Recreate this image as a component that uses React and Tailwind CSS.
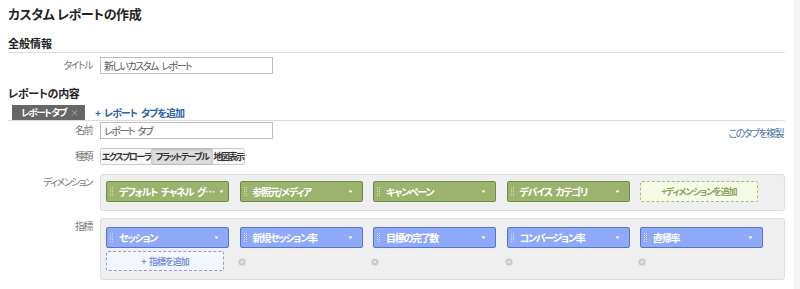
import React from "react";

const dimensions = ["デフォルト\u2002チャネル\u2002グ…", "参照元/メディア", "キャンペーン", "デバイス\u2002カテゴリ"];
const metrics = ["セッション", "新規セッション率", "目標の完了数", "コンバージョン率", "直帰率"];

function Grip({ color }) {
  return (
    <div className="grid grid-cols-2 gap-[1px] mr-[6px] shrink-0">
      {Array.from({ length: 10 }).map((_, i) => (
        <span key={i} className={`block w-[1px] h-[1px] ${color}`} />
      ))}
    </div>
  );
}

function Caret() {
  return (
    <svg width="7" height="4" viewBox="0 0 7 4" className="ml-auto shrink-0">
      <path d="M1.5 0.5h4L3.5 3z" fill="#fff" />
    </svg>
  );
}

function Chip({ label, kind }) {
  const green = kind === "dim";
  return (
    <div
      className={`flex items-center w-[123px] h-[21px] rounded-[2px] border pl-[3px] pr-[8px] shrink-0 ${
        green ? "bg-[#9bb36d] border-[#6f8a47]" : "bg-[#8ea9f7] border-[#5b72cc]"
      }`}
    >
      <Grip color={green ? "bg-[#d4e0bc]" : "bg-[#d6e0ff]"} />
      <span className="text-[10px] font-bold text-white leading-none whitespace-nowrap tracking-[-1.3px] pr-[4px]">
        {label}
      </span>
      <Caret />
    </div>
  );
}

function Row({ label, children, className = "" }) {
  return (
    <div className={`flex ${className}`}>
      <div className="w-[84px] shrink-0 text-right text-[10px] text-[#777] leading-none pt-[3px] whitespace-nowrap tracking-[-1.5px]">
        {label}
      </div>
      <div className="ml-[8px] flex-1">{children}</div>
    </div>
  );
}

function RemoveDot() {
  return (
    <svg width="8" height="8" viewBox="0 0 8 8">
      <circle cx="4" cy="4" r="3.6" fill="#c9c9c9" />
      <path d="M2.6 2.6l2.8 2.8M5.4 2.6l-2.8 2.8" stroke="#efefef" strokeWidth="1" />
    </svg>
  );
}

function Field({ value }) {
  return (
    <div className="w-[173px] h-[17px] border border-[#bbb] px-[3px] text-[10px] text-[#555] leading-[15px] whitespace-nowrap tracking-[-1.5px]">
      {value}
    </div>
  );
}

export default function App() {
  return (
    <div className="flex w-[800px] h-[289px] bg-white overflow-hidden font-['Noto_Sans_CJK_JP','Noto_Sans',sans-serif] [font-feature-settings:'palt']">
      <div className="w-[794px] shrink-0 pl-[8px] pr-[9px]">
        <h1 className="text-[13px] font-bold text-[#222] leading-none pt-[7px] tracking-[-0.4px]">カスタム レポートの作成</h1>

        <h2 className="text-[11px] font-bold text-[#222] leading-none mt-[18px] h-[15px] border-b border-[#ddd]">全般情報</h2>
        <Row label="タイトル" className="mt-[4px]">
          <Field value={"新しいカスタム\u2002レポート"} />
        </Row>

        <h2 className="text-[11px] font-bold text-[#222] leading-none mt-[14px] tracking-[-0.3px]">レポートの内容</h2>
        <div className="flex items-center mt-[6px] border-b border-[#ddd]">
          <div className="ml-[4px] w-[73px] h-[15px] shrink-0 bg-[#666] flex items-center justify-between pl-[9px] pr-[6px] leading-none whitespace-nowrap">
            <span className="text-[9.5px] font-bold text-white tracking-[-1.4px]">レポート タブ</span>
            <span className="text-[#aaa] text-[9px]">×</span>
          </div>
          <span className="ml-[10px] text-[10px] font-bold text-[#2a62a9] leading-none whitespace-nowrap tracking-[-1px]">
            {"+\u2002レポート\u2002タブを追加"}
          </span>
        </div>

        <div className="flex mt-[1px]">
          <div className="flex-1">
            <Row label="名前">
              <Field value={"レポート\u2002タブ"} />
            </Row>
          </div>
          <span className="text-[10px] text-[#4b74a8] leading-none mt-[6px] mr-[2px] whitespace-nowrap tracking-[-1.5px]">
            このタブを複製
          </span>
        </div>

        <Row label="種類" className="mt-[9px]">
          <div className="flex h-[17px] text-[9px] font-bold text-[#333] leading-none whitespace-nowrap tracking-[-1.5px]">
            <div className="w-[52px] flex items-center justify-center border border-[#ccc] bg-[#f7f7f7] rounded-l-[2px]">エクスプローラ</div>
            <div className="w-[60px] flex items-center justify-center border-y border-[#bbb] bg-[#dcdcdc] shadow-[inset_0_1px_2px_rgba(0,0,0,0.15)]">
              フラットテーブル
            </div>
            <div className="w-[33px] flex items-center justify-center border border-[#ccc] bg-[#f7f7f7] rounded-r-[2px]">地図表示</div>
          </div>
        </Row>

        <Row label="ディメンション" className="mt-[9px]">
          <div className="h-[37px] border border-[#ddd] rounded-[3px] bg-[#efefef] flex items-start gap-[10.5px] pl-[5px] pt-[6px]">
            {dimensions.map((d) => (
              <Chip key={d} label={d} kind="dim" />
            ))}
            <div className="w-[118px] h-[21px] border border-dashed border-[#a9bb7e] bg-[#f4fae6] rounded-[2px] flex items-center justify-center text-[9px] font-bold text-[#8aa15a] leading-none whitespace-nowrap tracking-[-1.1px]">
              +ディメンションを追加
            </div>
          </div>
        </Row>

        <Row label="指標" className="mt-[7px]">
          <div className="h-[62px] border border-[#ddd] rounded-[3px] bg-[#efefef] flex items-start gap-[10.5px] pl-[5px] pt-[8px]">
            {metrics.map((m, i) => (
              <div key={m} className="flex flex-col">
                <Chip label={m} kind="met" />
                {i === 0 ? (
                  <div className="mt-[3px] w-[118px] h-[20px] border border-dashed border-[#8d9fdf] bg-[#f3f6ff] rounded-[2px] flex items-center justify-center text-[9px] font-bold text-[#7e93d6] leading-none whitespace-nowrap tracking-[-1px]">
                    {"+\u2002指標を追加"}
                  </div>
                ) : (
                  <div className="mt-[10px] -ml-[2px]">
                    <RemoveDot />
                  </div>
                )}
              </div>
            ))}
          </div>
        </Row>
      </div>
      <div className="flex-1 bg-[#f4f4f4]" />
    </div>
  );
}
